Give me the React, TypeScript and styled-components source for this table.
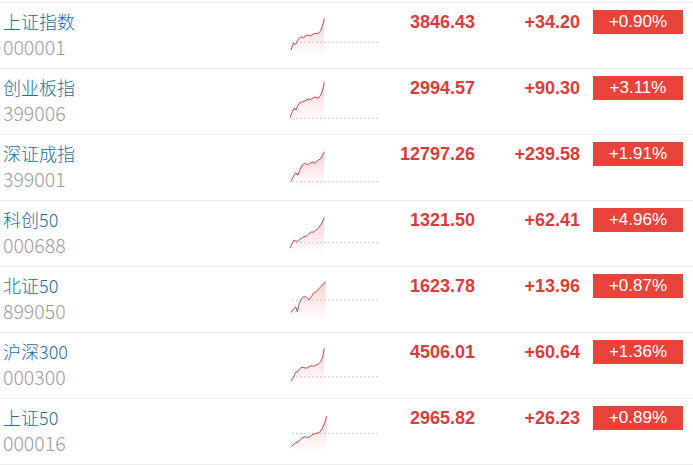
import React from "react";
import styled, { createGlobalStyle } from "styled-components";

const GlobalStyle = createGlobalStyle`
  html, body { margin: 0; padding: 0; background: #fff; }
  body { font-family: "Liberation Sans", Arial, "Noto Sans CJK SC", sans-serif; }
`;

type Row = {
  name: string;
  code: string;
  price: string;
  change: string;
  pct: string;
  pts: [number, number][];
  base: number;
};

const rows: Row[] = [
  {
    name: "上证指数", code: "000001", price: "3846.43", change: "+34.20", pct: "+0.90%",
    pts: [[2,36],[4.3,29.3],[6.7,30.3],[9.3,25.3],[11.7,22.7],[14.3,23.7],[16.7,22],[19,21],[21.7,22],[24.3,20],[27,19.3],[29.7,19.3],[31.7,16.7],[33.7,11],[35.3,4.3]],
    base: 28.3,
  },
  {
    name: "创业板指", code: "399006", price: "2994.57", change: "+90.30", pct: "+3.11%",
    pts: [[1,37.7],[3.3,31.7],[5,28.3],[7,30],[9.3,24.3],[11.7,22.3],[14.3,21.7],[17,20.3],[19.3,19],[21.7,19.7],[24.3,17.7],[27,17],[29.3,18.3],[31.7,15],[33.7,10],[35.3,2.3]],
    base: 38.3,
  },
  {
    name: "深证成指", code: "399001", price: "12797.26", change: "+239.58", pct: "+1.91%",
    pts: [[1.7,35.7],[4.3,30.7],[6.7,26.7],[9,29],[11,23.3],[13.7,18.7],[16.3,17.3],[18.7,18.7],[21,17.3],[23.7,16],[26,17.3],[28.3,14.7],[31,13.3],[33.3,10],[35.3,5.7]],
    base: 35.7,
  },
  {
    name: "科创50", code: "000688", price: "1321.50", change: "+62.41", pct: "+4.96%",
    pts: [[1,36.3],[3.3,31.3],[5,28],[7.7,29.7],[10,28],[12.7,26.3],[15,24.7],[17.7,24],[20.3,21.3],[22.7,19.7],[24.3,20.3],[27,18],[29.3,16.3],[31.7,13],[33.7,9],[35.3,5.7]],
    base: 30.7,
  },
  {
    name: "北证50", code: "899050", price: "1623.78", change: "+13.96", pct: "+0.87%",
    pts: [[1.7,34.7],[4.3,31.3],[6.7,28.7],[8.3,33.7],[10.3,25.3],[12.7,20.3],[15,18.7],[17.7,19.3],[20,22],[22.3,18.7],[24.3,15.3],[27,13.7],[29.3,11.3],[31.7,8.7],[34.3,6],[36.7,3.7]],
    base: 22,
  },
  {
    name: "沪深300", code: "000300", price: "4506.01", change: "+60.64", pct: "+1.36%",
    pts: [[2,37],[4.3,33.7],[6.7,28.3],[9.3,27],[11.7,23.7],[14.3,23.3],[17,24.3],[19.7,23],[22,21.7],[24.3,22.3],[27,21],[29.3,20],[31.7,17.7],[33.7,12.7],[35.3,4.3]],
    base: 32.7,
  },
  {
    name: "上证50", code: "000016", price: "2965.82", change: "+26.23", pct: "+0.89%",
    pts: [[2.3,36.7],[5.9,33.3],[9,31.7],[12.6,28.3],[16.1,26.7],[19.2,27.7],[22.8,25],[26.7,23.3],[30.3,22.7],[33.4,18.3],[36,11.7],[37.8,6]],
    base: 23.3,
  },
];

const List = styled.div`
  padding-top: 2px;
  width: 693px;
`;

const RowBox = styled.div`
  display: grid;
  grid-template-columns: 286px 100px 86px 105px 103px;
  height: 66px;
  box-sizing: border-box;
  padding-left: 3px;
  border-top: 1px solid #ececec;
  &:last-child { border-bottom: 1px solid #ececec; height: 67px; }
`;

const NameCol = styled.div`
  display: flex;
  flex-direction: column;
  padding-top: 5px;
  font-family: "Noto Sans CJK SC", "Microsoft YaHei", sans-serif;
  font-weight: 300;
`;

const Name = styled.div`
  font-size: 18px;
  line-height: 26px;
  color: #236c9c;
`;

const Code = styled.div`
  font-size: 19.5px;
  line-height: 26px;
  color: #999;
`;

const ChartCol = styled.div`
  padding-top: 11px;
`;

const Num = styled.div`
  text-align: right;
  font-size: 18px;
  font-weight: bold;
  color: #dc3b3b;
  line-height: 26px;
  padding-top: 6px;
  white-space: nowrap;
`;

const BadgeCol = styled.div`
  display: flex;
  justify-content: flex-end;
  padding-top: 7px;
`;

const Badge = styled.div`
  width: 90px;
  height: 24px;
  background: #e8423b;
  color: #fff;
  font-size: 17px;
  line-height: 24px;
  text-align: center;
`;

function Spark({ pts, base, id }: { pts: [number, number][]; base: number; id: string }) {
  const line = pts.map((p) => p.join(",")).join(" ");
  const last = pts[pts.length - 1];
  const first = pts[0];
  const area = `${line} ${last[0]},44 ${first[0]},44`;
  return (
    <svg width="94" height="44" viewBox="0 0 94 44">
      <defs>
        <linearGradient id={id} x1="0" y1="0" x2="0" y2="1">
          <stop offset="0" stopColor="#f08a8a" stopOpacity="0.45" />
          <stop offset="1" stopColor="#f5b5b5" stopOpacity="0" />
        </linearGradient>
      </defs>
      <polygon points={area} fill={`url(#${id})`} />
      <line x1="3" y1={base} x2="91" y2={base} stroke="#c9c9c9" strokeWidth="1" strokeDasharray="2 2" />
      <polyline points={line} fill="none" stroke="#b84a4e" strokeWidth="1" />
    </svg>
  );
}

export default function App() {
  return (
    <>
      <GlobalStyle />
      <List>
        {rows.map((r, i) => (
          <RowBox key={r.code}>
            <NameCol>
              <Name>{r.name}</Name>
              <Code>{r.code}</Code>
            </NameCol>
            <ChartCol>
              <Spark pts={r.pts} base={r.base} id={`g${i}`} />
            </ChartCol>
            <Num>{r.price}</Num>
            <Num>{r.change}</Num>
            <BadgeCol>
              <Badge>{r.pct}</Badge>
            </BadgeCol>
          </RowBox>
        ))}
      </List>
    </>
  );
}
